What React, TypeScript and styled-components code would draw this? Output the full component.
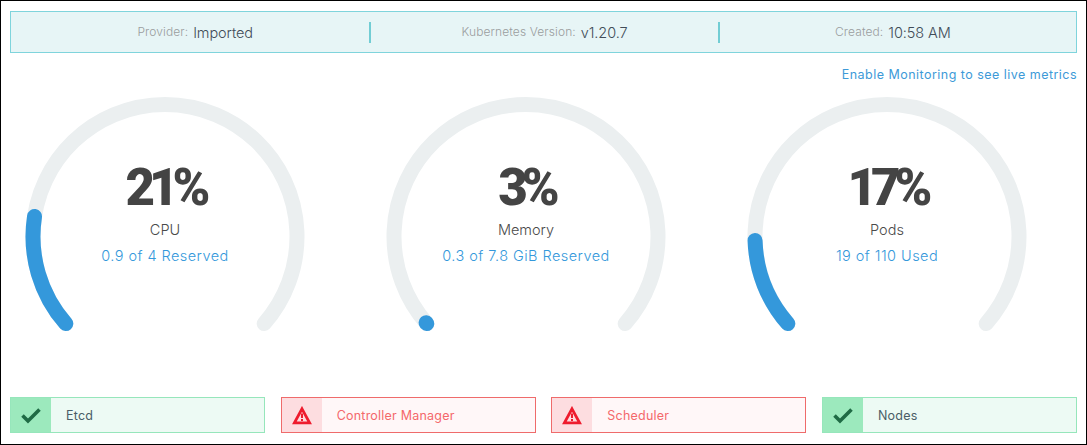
import React from "react";
import styled, { createGlobalStyle } from "styled-components";

const Global = createGlobalStyle`
  html, body { margin: 0; padding: 0; background: #fff; }
  * { box-sizing: border-box; }
`;

const Page = styled.div`
  width: 1087px;
  height: 445px;
  border: 1px solid #000;
  padding: 10px 9px 10px 9px;
  display: flex;
  flex-direction: column;
  font-family: "Inter", "Open Sans", sans-serif;
  font-weight: 300;
  background: #fff;
`;

const InfoBar = styled.div`
  height: 42px;
  flex: none;
  display: grid;
  grid-template-columns: repeat(3, 1fr);
  align-items: center;
  padding: 0 10px;
  background: #e7f5f6;
  border: 1px solid #7fd4dc;
`;

const InfoCell = styled.div<{ $divider?: boolean }>`
  height: 21px;
  display: flex;
  align-items: center;
  justify-content: center;
  gap: 5px;
  border-left: ${(p) => (p.$divider ? "2px solid #72cdd4" : "none")};
`;

const InfoLabel = styled.span`
  font-size: 12px;
  margin-bottom: 2px;
  letter-spacing: 0.1px;
  color: #9a9d9e;
`;

const InfoValue = styled.span`
  font-size: 14.5px;
  letter-spacing: -0.1px;
  color: #414c58;
`;

const LinkRow = styled.div`
  height: 44px;
  flex: none;
  display: flex;
  justify-content: flex-end;
  align-items: center;
  padding-bottom: 1px;
`;

const MonitoringLink = styled.a`
  font-size: 12.5px;
  letter-spacing: 0.47px;
  font-weight: 400;
  color: #3d9ad8;
`;

const GaugeRow = styled.div`
  flex: none;
  display: flex;
  justify-content: space-between;
  height: 270px;
  padding: 0 50px 0 15px;
`;

const GaugeCell = styled.div`
  position: relative;
  width: 280px;
`;

const GaugeSvg = styled.svg`
  display: block;
  width: 280px;
  height: 270px;
`;

const GaugeText = styled.div`
  position: absolute;
  left: 0;
  right: 0;
  top: 61px;
  display: flex;
  flex-direction: column;
  align-items: center;
`;

const Percent = styled.div`
  font-family: "Roboto", "Inter", sans-serif;
  font-size: 51px;
  font-weight: 900;
  line-height: 60px;
  letter-spacing: -6px;
  color: #444;
`;

const GaugeName = styled.div`
  font-size: 14.5px;
  line-height: 20px;
  margin-top: 2px;
  color: #4a4a4a;
`;

const GaugeDetail = styled.div`
  font-size: 14.5px;
  line-height: 20px;
  margin-top: 6px;
  letter-spacing: 0.45px;
  color: #3498db;
`;

const StatusRow = styled.div`
  margin-top: 30px;
  display: grid;
  grid-template-columns: repeat(4, 255px);
  justify-content: space-between;
`;

const StatusBox = styled.div<{ $ok: boolean }>`
  height: 36px;
  display: flex;
  align-items: stretch;
  border: 1px solid ${(p) => (p.$ok ? "#96e6bb" : "#ef6b6b")};
  background: ${(p) => (p.$ok ? "#edfaf4" : "#fff7f8")};
`;

const StatusIcon = styled.div<{ $ok: boolean }>`
  width: 40px;
  flex: none;
  display: flex;
  align-items: center;
  justify-content: center;
  background: ${(p) => (p.$ok ? "#9ce9bd" : "#fddde0")};
`;

const StatusName = styled.div<{ $ok: boolean }>`
  display: flex;
  align-items: center;
  padding-left: 15px;
  font-size: 12.5px;
  font-weight: 400;
  letter-spacing: 0.22px;
  color: ${(p) => (p.$ok ? "#4a5d66" : "#f4686b")};
`;

const CheckIcon = () => (
  <svg width="22" height="18" viewBox="0 0 22 18">
    <path d="M2.5 9.5 L8 15 L19.5 3.5" fill="none" stroke="#1f6b45" strokeWidth="3.6" />
  </svg>
);

const WarnIcon = () => (
  <svg width="20" height="19" viewBox="0 0 20 19">
    <path d="M10 2.8 L17.6 16.8 H2.4 Z" fill="none" stroke="#ee1c2e" strokeWidth="2.8" strokeLinejoin="miter" />
    <rect x="9" y="7.5" width="2" height="4.5" fill="#ee1c2e" />
    <rect x="9" y="13" width="2" height="2" fill="#ee1c2e" />
  </svg>
);

const CX = 140;
const CY = 139.5;
const R = 132;
const START = 41.3;

function point(deg: number) {
  const a = (deg * Math.PI) / 180;
  return [CX - R * Math.cos(a), CY + R * Math.sin(a)];
}

function arc(sweep: number) {
  const [x0, y0] = point(START);
  const [x1, y1] = point(START - sweep);
  const large = sweep > 180 ? 1 : 0;
  return `M${x0} ${y0} A${R} ${R} 0 ${large} 1 ${x1} ${y1}`;
}

function Gauge(props: { pct: string; name: string; detail: string; sweep: number }) {
  return (
    <GaugeCell>
      <GaugeSvg viewBox="0 0 280 270">
        <path d={arc(262.6)} fill="none" stroke="#ebeff0" strokeWidth="15" strokeLinecap="round" />
        <path d={arc(props.sweep)} fill="none" stroke="#3498db" strokeWidth="15" strokeLinecap="round" />
      </GaugeSvg>
      <GaugeText>
        <Percent>{props.pct}</Percent>
        <GaugeName>{props.name}</GaugeName>
        <GaugeDetail>{props.detail}</GaugeDetail>
      </GaugeText>
    </GaugeCell>
  );
}

function Status(props: { ok: boolean; name: string }) {
  return (
    <StatusBox $ok={props.ok}>
      <StatusIcon $ok={props.ok}>{props.ok ? <CheckIcon /> : <WarnIcon />}</StatusIcon>
      <StatusName $ok={props.ok}>{props.name}</StatusName>
    </StatusBox>
  );
}

export default function App() {
  return (
    <Page>
      <Global />
      <InfoBar>
        <InfoCell>
          <InfoLabel>Provider:</InfoLabel>
          <InfoValue>Imported</InfoValue>
        </InfoCell>
        <InfoCell $divider>
          <InfoLabel>Kubernetes Version:</InfoLabel>
          <InfoValue>v1.20.7</InfoValue>
        </InfoCell>
        <InfoCell $divider>
          <InfoLabel>Created:</InfoLabel>
          <InfoValue>10:58 AM</InfoValue>
        </InfoCell>
      </InfoBar>
      <LinkRow>
        <MonitoringLink>Enable Monitoring to see live metrics</MonitoringLink>
      </LinkRow>
      <GaugeRow>
        <Gauge pct="21%" name="CPU" detail="0.9 of 4 Reserved" sweep={50} />
        <Gauge pct="3%" name="Memory" detail="0.3 of 7.8 GiB Reserved" sweep={0.5} />
        <Gauge pct="17%" name="Pods" detail="19 of 110 Used" sweep={39.6} />
      </GaugeRow>
      <StatusRow>
        <Status ok name="Etcd" />
        <Status ok={false} name="Controller Manager" />
        <Status ok={false} name="Scheduler" />
        <Status ok name="Nodes" />
      </StatusRow>
    </Page>
  );
}
